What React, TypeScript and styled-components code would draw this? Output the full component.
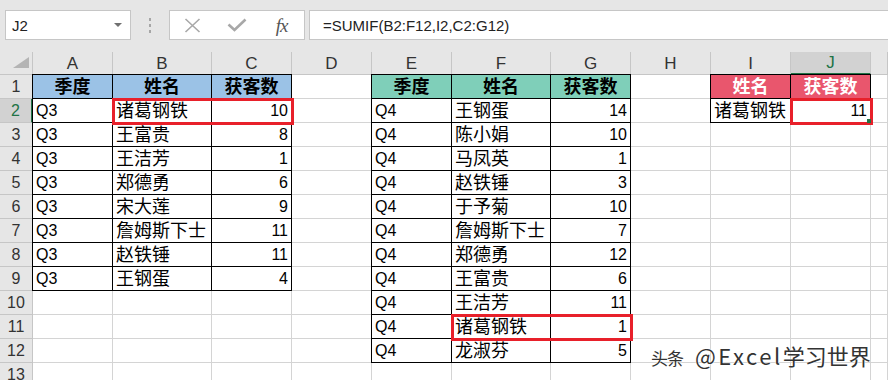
import React from 'react';
import styled, { createGlobalStyle, css } from 'styled-components';

const GlobalStyle = createGlobalStyle`
  html, body {
    margin: 0;
    padding: 0;
    background: #fff;
    overflow: hidden;
  }
  body {
    font-family: 'Liberation Sans', 'Noto Sans CJK SC', sans-serif;
    color: #000;
  }
`;

const Page = styled.div`
  position: relative;
  width: 888px;
  height: 380px;
  overflow: hidden;
  background: #fff;
`;

/* ---------- formula bar ---------- */

const FormulaBar = styled.div`
  display: flex;
  align-items: flex-start;
  height: 52px;
  padding: 10px 0 0 5px;
  box-sizing: border-box;
  background: #e6e6e6;
`;

const NameBox = styled.div`
  display: flex;
  align-items: center;
  justify-content: space-between;
  width: 126px;
  height: 30px;
  box-sizing: border-box;
  padding: 0 8px 0 6px;
  background: #fff;
  border: 1px solid #c6c6c6;
  font-size: 15px;
  color: #222;
`;

const DropArrow = styled.span`
  width: 0;
  height: 0;
  border-left: 4px solid transparent;
  border-right: 4px solid transparent;
  border-top: 4px solid #707070;
`;

const Grip = styled.div`
  display: flex;
  flex-direction: column;
  align-items: center;
  justify-content: center;
  gap: 3px;
  width: 38px;
  height: 30px;
  span {
    width: 2px;
    height: 3px;
    background: #a6a6a6;
  }
`;

const IconBox = styled.div`
  display: flex;
  align-items: center;
  width: 136px;
  height: 30px;
  box-sizing: border-box;
  background: #fff;
  border: 1px solid #c6c6c6;
`;

const IconSlot = styled.div`
  display: flex;
  align-items: center;
  justify-content: center;
  width: 45px;
  height: 100%;
`;

const Fx = styled.span`
  font-family: 'Liberation Serif', serif;
  font-style: italic;
  font-size: 19px;
  color: #555;
  letter-spacing: -1px;
  margin-top: 2px;
`;

const FormulaInput = styled.div`
  flex: 1;
  display: flex;
  align-items: center;
  height: 30px;
  margin: 0 -2px 0 4px;
  box-sizing: border-box;
  padding-left: 13px;
  background: #fff;
  border: 1px solid #c6c6c6;
  font-size: 15px;
  color: #222;
`;

/* ---------- sheet grid ---------- */

const Sheet = styled.div`
  display: grid;
  grid-template-columns: 33px 80px 99px 80px 80px 80px 99px 80px 80px 80px 80px 1fr;
  grid-template-rows: 23px repeat(13, 24px);
`;

type Fill = 'blue' | 'teal' | 'pink';
const fills: Record<Fill, string> = {
  blue: '#9bc2e6',
  teal: '#7fcfb9',
  pink: '#e9566d',
};

const Placed = css<{ $row: number; $col: number }>`
  grid-row: ${p => p.$row};
  grid-column: ${p => p.$col};
`;

const Corner = styled.div<{ $row: number; $col: number }>`
  ${Placed}
  display: flex;
  align-items: flex-end;
  justify-content: flex-end;
  padding: 0 3px 6px 0;
  box-sizing: border-box;
  background: #e6e6e6;
  border-right: 1px solid #c6c6c6;
  border-bottom: 1px solid #c6c6c6;
`;

const ColHead = styled.div<{ $row: number; $col: number; $active?: boolean }>`
  ${Placed}
  display: flex;
  align-items: center;
  justify-content: center;
  box-sizing: border-box;
  padding-top: 1px;
  background: ${p => (p.$active ? '#d2d2d2' : '#e6e6e6')};
  border-right: 1px solid #c6c6c6;
  border-bottom: ${p => (p.$active ? '2px solid #217346' : '1px solid #c6c6c6')};
  font-size: 17px;
  color: ${p => (p.$active ? '#217346' : '#333')};
`;

const RowHead = styled.div<{ $row: number; $col: number; $active?: boolean }>`
  ${Placed}
  display: flex;
  align-items: center;
  justify-content: center;
  box-sizing: border-box;
  background: ${p => (p.$active ? '#d2d2d2' : '#e6e6e6')};
  border-right: ${p => (p.$active ? '2px solid #217346' : '1px solid #c6c6c6')};
  border-bottom: 1px solid #c6c6c6;
  font-size: 16px;
  color: ${p => (p.$active ? '#217346' : '#333')};
`;

const Cell = styled.div<{
  $row: number;
  $col: number;
  $align: 'left' | 'center' | 'right';
  $fill?: Fill;
  $boxed?: boolean;
  $cjk?: boolean;
  $bold?: boolean;
}>`
  ${Placed}
  display: flex;
  align-items: center;
  justify-content: ${p =>
    p.$align === 'right' ? 'flex-end' : p.$align === 'center' ? 'center' : 'flex-start'};
  box-sizing: border-box;
  padding: 1px 3px 0 3px;
  white-space: nowrap;
  overflow: hidden;
  background: ${p => (p.$fill ? fills[p.$fill] : '#fff')};
  border-right: 1px solid ${p => (p.$boxed ? '#000' : '#d4d4d4')};
  border-bottom: 1px solid ${p => (p.$boxed ? '#000' : '#d4d4d4')};
  box-shadow: ${p => (p.$boxed ? '-1px 0 0 #000, 0 -1px 0 #000, -1px -1px 0 #000' : 'none')};
  font-size: ${p => (p.$cjk ? '18px' : '16px')};
  font-weight: ${p => (p.$bold ? 700 : 400)};
  line-height: 22px;
  color: ${p => (p.$fill === 'pink' ? '#fff' : '#000')};
`;

const Highlight = styled.div<{ $row: number; $col: string; $handle?: boolean }>`
  grid-row: ${p => p.$row};
  grid-column: ${p => p.$col};
  position: relative;
  z-index: 2;
  margin: -1px -2px -2px -1px;
  border: 3px solid #e8202a;
  pointer-events: none;
  ${p =>
    p.$handle &&
    css`
      &::after {
        content: '';
        position: absolute;
        right: -1px;
        bottom: -1px;
        width: 4px;
        height: 4px;
        background: #217346;
      }
    `}
`;

const Watermark = styled.div`
  position: absolute;
  left: 651px;
  top: 342px;
  display: flex;
  align-items: baseline;
  gap: 12px;
  color: #333;
  font-family: 'Noto Sans CJK SC', sans-serif;
  font-size: 22px;
  line-height: 26px;
  text-shadow: 0 0 2px #fff, 0 0 1px #fff;
  small {
    font-size: 17px;
    letter-spacing: -1px;
  }
  em {
    font-style: normal;
    letter-spacing: 2.5px;
  }
`;

/* ---------- data ---------- */

type CellDef = {
  v: string;
  align: 'left' | 'center' | 'right';
  fill?: Fill;
  cjk?: boolean;
  bold?: boolean;
};

const letters = ['A', 'B', 'C', 'D', 'E', 'F', 'G', 'H', 'I', 'J', ''];

const table1: [string, number][] = [
  ['诸葛钢铁', 10],
  ['王富贵', 8],
  ['王洁芳', 1],
  ['郑德勇', 6],
  ['宋大莲', 9],
  ['詹姆斯下士', 11],
  ['赵铁锤', 11],
  ['王钢蛋', 4],
];

const table2: [string, number][] = [
  ['王钢蛋', 14],
  ['陈小娟', 10],
  ['马凤英', 1],
  ['赵铁锤', 3],
  ['于予菊', 10],
  ['詹姆斯下士', 7],
  ['郑德勇', 12],
  ['王富贵', 6],
  ['王洁芳', 11],
  ['诸葛钢铁', 1],
  ['龙淑芬', 5],
];

const cells = new Map<string, CellDef>();
const put = (r: number, c: number, d: CellDef) => cells.set(`${r}-${c}`, d);

function addTable(startCol: number, quarter: string, rows: [string, number][], fill: Fill) {
  ['季度', '姓名', '获客数'].forEach((h, i) =>
    put(1, startCol + i, { v: h, align: 'center', fill, cjk: true, bold: true })
  );
  rows.forEach(([name, n], i) => {
    put(i + 2, startCol, { v: quarter, align: 'left' });
    put(i + 2, startCol + 1, { v: name, align: 'left', cjk: true });
    put(i + 2, startCol + 2, { v: String(n), align: 'right' });
  });
}

addTable(1, 'Q3', table1, 'blue');
addTable(5, 'Q4', table2, 'teal');
put(1, 9, { v: '姓名', align: 'center', fill: 'pink', cjk: true, bold: true });
put(1, 10, { v: '获客数', align: 'center', fill: 'pink', cjk: true, bold: true });
put(2, 9, { v: '诸葛钢铁', align: 'left', cjk: true });
put(2, 10, { v: '11', align: 'right' });

const boxed = (r: number, c: number) =>
  (c >= 1 && c <= 3 && r <= 9) || (c >= 5 && c <= 7 && r <= 12) || (c >= 9 && c <= 10 && r <= 2);

const CrossIcon = () => (
  <svg width="17" height="15" viewBox="0 0 17 15">
    <path d="M1.5 1 L15.5 14 M15.5 1 L1.5 14" stroke="#a8a8a8" strokeWidth="1.6" fill="none" />
  </svg>
);

const CheckIcon = () => (
  <svg width="20" height="14" viewBox="0 0 20 14">
    <path d="M1.5 6.5 L7.5 12 L18.5 1.5" stroke="#a8a8a8" strokeWidth="2.6" fill="none" />
  </svg>
);

export default function App() {
  const body: React.ReactNode[] = [];
  for (let r = 1; r <= 13; r++) {
    body.push(
      <RowHead key={`rh${r}`} $row={r + 1} $col={1} $active={r === 2}>
        {r}
      </RowHead>
    );
    for (let c = 1; c <= 11; c++) {
      const d = cells.get(`${r}-${c}`);
      body.push(
        <Cell
          key={`${r}-${c}`}
          $row={r + 1}
          $col={c + 1}
          $align={d?.align ?? 'left'}
          $fill={d?.fill}
          $cjk={d?.cjk}
          $bold={d?.bold}
          $boxed={boxed(r, c)}
        >
          {d?.v}
        </Cell>
      );
    }
  }

  return (
    <Page>
      <GlobalStyle />
      <FormulaBar>
        <NameBox>
          J2
          <DropArrow />
        </NameBox>
        <Grip>
          <span />
          <span />
          <span />
        </Grip>
        <IconBox>
          <IconSlot>
            <CrossIcon />
          </IconSlot>
          <IconSlot>
            <CheckIcon />
          </IconSlot>
          <IconSlot>
            <Fx>fx</Fx>
          </IconSlot>
        </IconBox>
        <FormulaInput>=SUMIF(B2:F12,I2,C2:G12)</FormulaInput>
      </FormulaBar>

      <Sheet>
        <Corner $row={1} $col={1}>
          <svg width="16" height="11" viewBox="0 0 16 11">
            <polygon points="16,0 16,11 0,11" fill="#b4b4b4" />
          </svg>
        </Corner>
        {letters.map((l, i) => (
          <ColHead key={`ch${i}`} $row={1} $col={i + 2} $active={l === 'J'}>
            {l}
          </ColHead>
        ))}
        {body}
        <Highlight $row={3} $col="3 / 5" />
        <Highlight $row={12} $col="7 / 9" />
        <Highlight $row={3} $col="11 / 12" $handle />
      </Sheet>

      <Watermark>
        <small>头条</small>
        <span>
          <em>@Excel</em>学习世界
        </span>
      </Watermark>
    </Page>
  );
}
